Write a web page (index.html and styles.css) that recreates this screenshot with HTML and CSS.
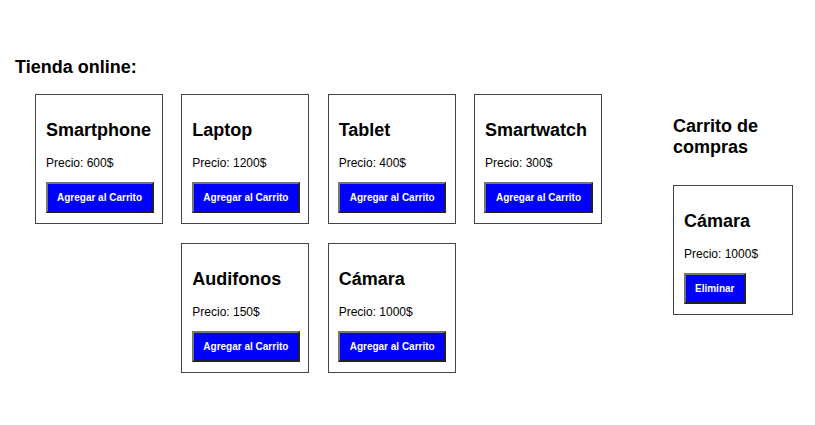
FILE: index.html
```html
<!DOCTYPE html>
<html lang="es">
<head>
<meta charset="utf-8">
<title>Tienda online</title>
<link rel="stylesheet" href="styles.css">
</head>
<body>
<div class="page">
  <section class="tienda">
    <h2 class="section-title">Tienda online:</h2>
    <div class="productos">
      <div class="card">
        <h2 class="card-title">Smartphone</h2>
        <p class="card-price">Precio: 600$</p>
        <button class="btn">Agregar al Carrito</button>
      </div>
      <div class="card">
        <h2 class="card-title">Laptop</h2>
        <p class="card-price">Precio: 1200$</p>
        <button class="btn">Agregar al Carrito</button>
      </div>
      <div class="card">
        <h2 class="card-title">Tablet</h2>
        <p class="card-price">Precio: 400$</p>
        <button class="btn">Agregar al Carrito</button>
      </div>
      <div class="card">
        <h2 class="card-title">Smartwatch</h2>
        <p class="card-price">Precio: 300$</p>
        <button class="btn">Agregar al Carrito</button>
      </div>
      <div class="card">
        <h2 class="card-title">Audifonos</h2>
        <p class="card-price">Precio: 150$</p>
        <button class="btn">Agregar al Carrito</button>
      </div>
      <div class="card">
        <h2 class="card-title">Cámara</h2>
        <p class="card-price">Precio: 1000$</p>
        <button class="btn">Agregar al Carrito</button>
      </div>
    </div>
  </section>
  <aside class="carrito">
    <h2 class="section-title">Carrito de compras</h2>
    <div class="card cart-card">
      <h2 class="card-title">Cámara</h2>
      <p class="card-price">Precio: 1000$</p>
      <button class="btn">Eliminar</button>
    </div>
  </aside>
</div>
</body>
</html>
```

FILE: styles.css
```css
html, body {
  margin: 0;
  padding: 0;
  background: #fff;
}

body {
  font-family: "Liberation Sans", Arial, sans-serif;
  color: #000;
}

.page {
  display: flex;
  align-items: flex-start;
  padding: 0 22px 0 15px;
}

.tienda {
  flex: 0 0 607px;
  padding-top: 42px;
}

.section-title {
  font-size: 18px;
  font-weight: bold;
  margin: 0.83em 0;
}

.productos {
  display: flex;
  flex-wrap: wrap;
  justify-content: center;
  gap: 19px 18.33px;
  padding-top: 1.5px;
}

.card {
  box-sizing: border-box;
  width: 128px;
  border: 1px solid #444;
  padding: 10px;
  background: #fff;
}

.card-title {
  font-size: 18px;
  font-weight: bold;
  margin: 0.83em 0;
}

.card-price {
  font-size: 12px;
  margin: 12px 0;
}

.btn {
  font-family: "Liberation Sans", Arial, sans-serif;
  font-size: 10px;
  font-weight: bold;
  color: #fff;
  background: #0000ff;
  border: 2px outset #767676;
  padding: 8px 9.5px;
  margin: 0 0 0 -0.5px;
  white-space: nowrap;
  cursor: pointer;
}

.carrito {
  flex: 0 0 120px;
  margin-left: 51px;
  padding-top: 101.5px;
}

.cart-card {
  width: auto;
  margin-top: 27px;
}
```
